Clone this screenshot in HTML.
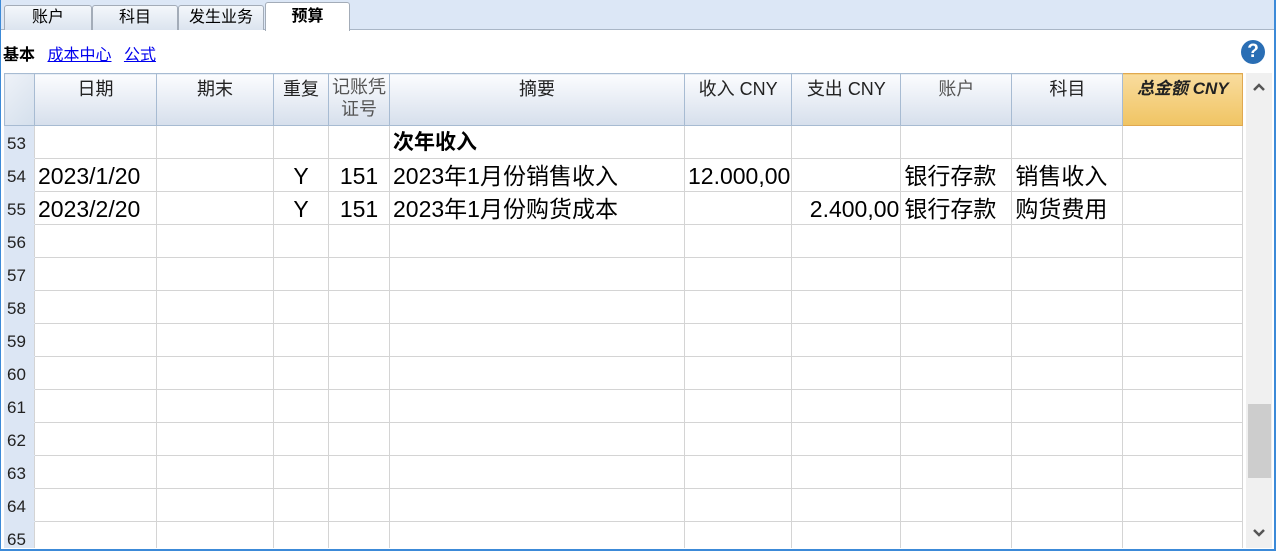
<!DOCTYPE html>
<html><head><meta charset="utf-8"><style>
*{margin:0;padding:0;box-sizing:border-box}
body{width:1276px;height:551px;overflow:hidden;background:#fff;font-family:"Liberation Sans","Noto Sans CJK SC",sans-serif;position:relative}
.frame{position:absolute;left:0;top:0;width:1276px;height:551px;border:2px solid #3c8ad8;border-top:none;border-left:1px solid #3c8ad8}
.strip{position:absolute;left:0;top:0;width:1276px;height:30px;background:#dce7f6;border-bottom:1px solid #a9b6c6}
.tab{position:absolute;top:5px;height:25px;background:linear-gradient(#f4f7fb,#dce4ef);border:1px solid #a3acb8;border-bottom:none;border-radius:3px 3px 0 0;font-size:16px;text-align:center;line-height:24px;color:#000}
.tab.sel{top:2px;height:29px;background:#fff;font-weight:bold;line-height:28px}
.links{position:absolute;top:41px;left:3px;font-size:16px}
.links a{color:#0000ee;text-decoration:underline;margin-left:8px}
.help{position:absolute;left:1241px;top:40px;width:24px;height:24px;border-radius:50%;background:#2a6eb4;color:#fff;font-weight:bold;font-size:19px;text-align:center;line-height:24px}
.wrap{position:absolute;left:4px;top:73px;width:1240px;height:475px;overflow:hidden}
table{border-collapse:collapse;table-layout:fixed}
td,th{border:1px solid #d4d4d4;height:33px;font-size:23px;line-height:30px;white-space:nowrap;overflow:hidden;padding:2px 3px 0}
th{height:52px;font-weight:normal;font-size:18px;line-height:22px;vertical-align:top;padding-top:4px;background:linear-gradient(#fbfcfe,#d6dfec);border:1px solid #a7bbd2;color:#222}
td.n{background:#dce6f4;font-size:17px;padding:4px 2px 0;line-height:26px;border-color:#dce6f4 #d4d4d4 #dce6f4 #dce6f4;color:#222}
th.c0{background:linear-gradient(135deg,#eef2f8,#d4dfec)}
th.tot{background:linear-gradient(#f9dc9d,#f0c463);border-color:#e0a850;font-weight:bold;font-style:italic;font-size:17px}
.r{text-align:right}.c{text-align:center}
.sb{position:absolute;left:1246px;top:73px;width:26px;height:475px;background:#f0f0f0}
.thumb{position:absolute;left:1248px;top:404px;width:23px;height:74px;background:#cdcdcd}
</style></head><body>
<div class="strip"></div>
<div class="tab" style="left:4px;width:88px">账户</div>
<div class="tab" style="left:92px;width:86px">科目</div>
<div class="tab" style="left:178px;width:86px">发生业务</div>
<div class="tab sel" style="left:265px;width:85px">预算</div>
<div class="links"><b>基本</b> <a>成本中心</a> <a>公式</a></div>
<div class="help">?</div>
<div class="wrap">
<table>
<colgroup><col style="width:30px"><col style="width:122px"><col style="width:117px"><col style="width:55px"><col style="width:61px"><col style="width:295px"><col style="width:106px"><col style="width:109px"><col style="width:111px"><col style="width:111px"><col style="width:120px"></colgroup>
<tr><th class="c0"></th><th>日期</th><th>期末</th><th>重复</th><th style="padding-top:2px;color:#555">记账凭<br>证号</th><th>摘要</th><th>收入 CNY</th><th>支出 CNY</th><th style="color:#555">账户</th><th>科目</th><th class="tot">总金额 CNY</th></tr>
<tr><td class="n">53</td><td></td><td></td><td></td><td></td><td style="font-weight:bold;font-size:21px">次年收入</td><td></td><td></td><td></td><td></td><td></td></tr>
<tr><td class="n">54</td><td>2023/1/20</td><td></td><td class="c">Y</td><td class="c">151</td><td>2023年1月份销售收入</td><td class="r" style="padding-right:1px">12.000,00</td><td></td><td>银行存款</td><td>销售收入</td><td></td></tr>
<tr><td class="n">55</td><td>2023/2/20</td><td></td><td class="c">Y</td><td class="c">151</td><td>2023年1月份购货成本</td><td></td><td class="r" style="padding-right:1px">2.400,00</td><td>银行存款</td><td>购货费用</td><td></td></tr>
<tr><td class="n">56</td><td></td><td></td><td></td><td></td><td></td><td></td><td></td><td></td><td></td><td></td></tr>
<tr><td class="n">57</td><td></td><td></td><td></td><td></td><td></td><td></td><td></td><td></td><td></td><td></td></tr>
<tr><td class="n">58</td><td></td><td></td><td></td><td></td><td></td><td></td><td></td><td></td><td></td><td></td></tr>
<tr><td class="n">59</td><td></td><td></td><td></td><td></td><td></td><td></td><td></td><td></td><td></td><td></td></tr>
<tr><td class="n">60</td><td></td><td></td><td></td><td></td><td></td><td></td><td></td><td></td><td></td><td></td></tr>
<tr><td class="n">61</td><td></td><td></td><td></td><td></td><td></td><td></td><td></td><td></td><td></td><td></td></tr>
<tr><td class="n">62</td><td></td><td></td><td></td><td></td><td></td><td></td><td></td><td></td><td></td><td></td></tr>
<tr><td class="n">63</td><td></td><td></td><td></td><td></td><td></td><td></td><td></td><td></td><td></td><td></td></tr>
<tr><td class="n">64</td><td></td><td></td><td></td><td></td><td></td><td></td><td></td><td></td><td></td><td></td></tr>
<tr><td class="n">65</td><td></td><td></td><td></td><td></td><td></td><td></td><td></td><td></td><td></td><td></td></tr>
</table>
</div>
<div class="sb"></div>
<div class="thumb"></div>
<svg style="position:absolute;left:1252px;top:82px" width="14" height="10"><path d="M2 8 L7 3 L12 8" fill="none" stroke="#555" stroke-width="2.5"/></svg>
<svg style="position:absolute;left:1252px;top:528px" width="14" height="10"><path d="M2 2 L7 7 L12 2" fill="none" stroke="#555" stroke-width="2.5"/></svg>
<div class="frame"></div>
</body></html>
